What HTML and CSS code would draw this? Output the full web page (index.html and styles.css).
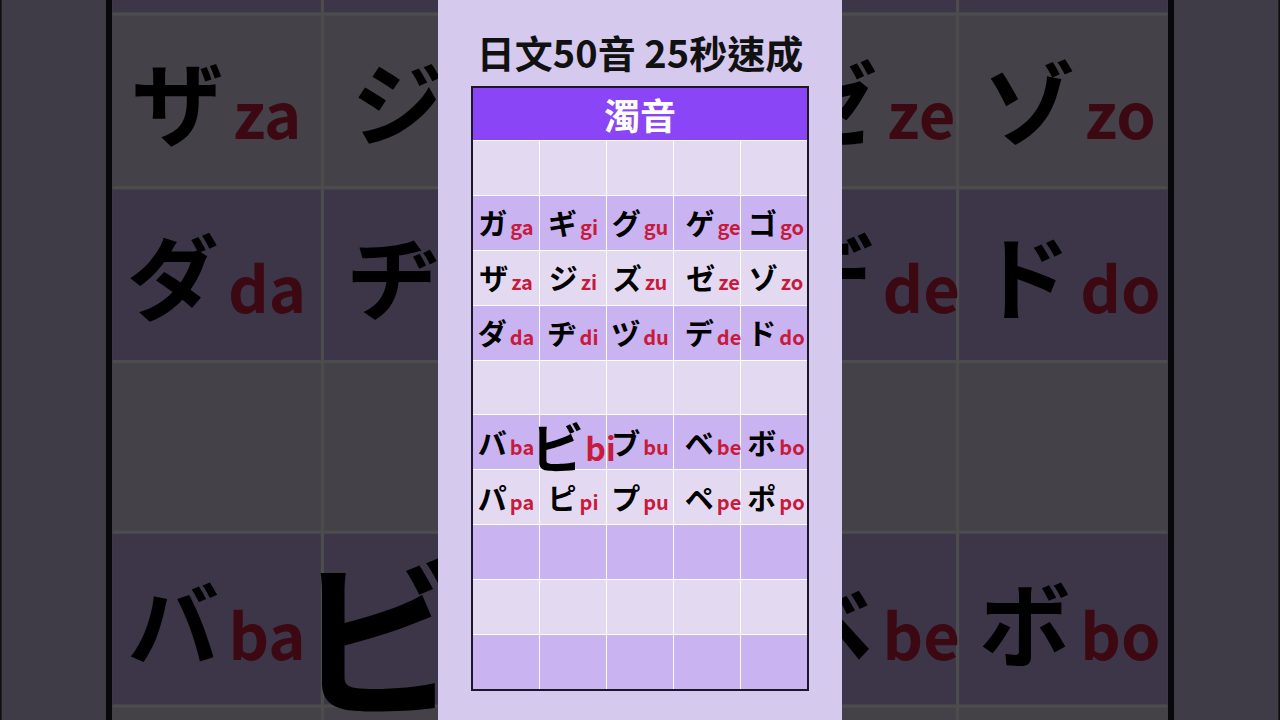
FILE: index.html
```html
<!DOCTYPE html>
<html lang="zh-Hant">
<head>
  <meta charset="UTF-8" />
  <meta name="viewport" content="width=device-width, initial-scale=1.0"/>
  <title>日文50音 25秒速成</title>
  <link rel="stylesheet" href="styles.css">
</head>
<body>
  <div class="stage">
    <div class="backdrop" id="backdrop" aria-hidden="true"></div>

    <div class="screen" id="screen">
      <h1 class="title">日文50音 25秒速成</h1>
      <div class="chart">
        <div class="chart-head">濁音</div>
        <div class="chart-body" id="chartBody"></div>
      </div>
    </div>
  </div>

  <script>
    const rows = [
      [],
      [["ガ", "ga"], ["ギ", "gi"], ["グ", "gu"], ["ゲ", "ge"], ["ゴ", "go"]],
      [["ザ", "za"], ["ジ", "zi"], ["ズ", "zu"], ["ゼ", "ze"], ["ゾ", "zo"]],
      [["ダ", "da"], ["ヂ", "di"], ["ヅ", "du"], ["デ", "de"], ["ド", "do"]],
      [],
      [["バ", "ba"], ["ビ", "bi"], ["ブ", "bu"], ["ベ", "be"], ["ボ", "bo"]],
      [["パ", "pa"], ["ピ", "pi"], ["プ", "pu"], ["ペ", "pe"], ["ポ", "po"]],
      [],
      [],
      []
    ];
    // the kana being read out right now is drawn big
    const current = "ビ";

    const chartBody = document.getElementById("chartBody");
    rows.forEach((row, r) => {
      for (let c = 0; c < 5; c++) {
        const cell = document.createElement("div");
        cell.className = "cell " + (r % 2 ? "cell-dark" : "cell-light");
        const item = row[c];
        if (item) {
          if (item[0] === current) cell.classList.add("is-active");
          cell.innerHTML = `<span class="pair"><span class="kana">${item[0]}</span><span class="roma">${item[1]}</span></span>`;
        }
        chartBody.appendChild(cell);
      }
    });

    // blown-up, dimmed copy behind the frame
    const copy = document.getElementById("screen").cloneNode(true);
    copy.removeAttribute("id");
    copy.querySelector("#chartBody").removeAttribute("id");
    document.getElementById("backdrop").appendChild(copy);
  </script>
</body>
</html>
```

FILE: styles.css
```css
body {
  margin: 0;
  background: #0f0f0f;
  font-family: "Noto Sans CJK JP", "Noto Sans CJK TC", sans-serif;
}
.stage {
  position: relative;
  width: 1280px;
  height: 720px;
  overflow: hidden;
}
.backdrop {
  position: absolute;
  inset: 0;
  display: flex;
  justify-content: center;
  filter: brightness(0.3);
}
.backdrop .screen {
  transform: scale(3.16);
  flex-shrink: 0;
}
.screen {
  position: relative;
  z-index: 1;
  width: 404px;
  height: 720px;
  margin: 0 auto;
  background: #d6c9ee;
  display: flex;
  flex-direction: column;
  align-items: center;
  padding-top: 31px;
  box-sizing: border-box;
}
.title {
  margin: 0 0 14px;
  font-family: "Noto Sans CJK TC", sans-serif;
  font-size: 38px;
  line-height: 41px;
  font-weight: 700;
  color: #111;
  white-space: nowrap;
}
.chart {
  width: 338px;
  border: 2px solid #1c1726;
  box-sizing: border-box;
}
.chart-head {
  height: 52px;
  background: #8a45f7;
  color: #fff;
  font-family: "Noto Sans CJK TC", sans-serif;
  font-size: 36px;
  font-weight: 700;
  display: flex;
  align-items: center;
  justify-content: center;
}
.chart-body {
  display: grid;
  grid-template-columns: repeat(5, minmax(0, 1fr));
  grid-auto-rows: 53.9px;
  gap: 1px;
  padding-top: 1px;
  background: #fff;
}
.cell {
  display: flex;
  align-items: center;
  justify-content: center;
}
/* the last two columns sit a little right of centre */
.cell:nth-child(5n+4) {
  padding-left: 12px;
}
.cell:nth-child(5n) {
  padding-left: 4px;
}
.cell-light {
  background: #e3daf2;
}
.cell-dark {
  background: #cab3f1;
}
.pair {
  white-space: nowrap;
  line-height: 1;
}
.kana {
  font-size: 29px;
  font-weight: 700;
  color: #000;
}
.roma {
  margin-left: 3px;
  font-size: 20px;
  font-weight: 700;
  color: #c81a3c;
}
.cell.is-active {
  position: relative;
  z-index: 1;
  align-items: flex-end;
}
.is-active .pair {
  margin-bottom: -4px;
}
.is-active .kana {
  font-size: 54px;
}
.is-active .roma {
  margin-left: 1px;
  font-size: 32px;
  vertical-align: 0.26em;
}
```
